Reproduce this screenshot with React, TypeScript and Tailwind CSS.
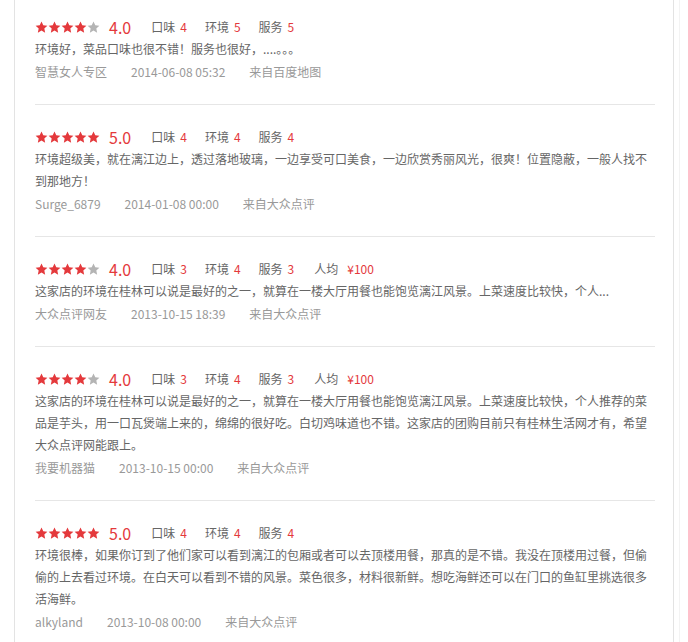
import React from "react";

type Review = {
  stars: number;
  score: string;
  taste: number;
  env: number;
  service: number;
  avg?: string;
  text: string;
  user: string;
  date: string;
  source: string;
};

const reviews: Review[] = [
  {
    stars: 4,
    score: "4.0",
    taste: 4,
    env: 5,
    service: 5,
    text: "环境好，菜品口味也很不错！服务也很好，....。。。",
    user: "智慧女人专区",
    date: "2014-06-08 05:32",
    source: "来自百度地图",
  },
  {
    stars: 5,
    score: "5.0",
    taste: 4,
    env: 4,
    service: 4,
    text: "环境超级美，就在漓江边上，透过落地玻璃，一边享受可口美食，一边欣赏秀丽风光，很爽！位置隐蔽，一般人找不到那地方！",
    user: "Surge_6879",
    date: "2014-01-08 00:00",
    source: "来自大众点评",
  },
  {
    stars: 4,
    score: "4.0",
    taste: 3,
    env: 4,
    service: 3,
    avg: "¥100",
    text: "这家店的环境在桂林可以说是最好的之一，就算在一楼大厅用餐也能饱览漓江风景。上菜速度比较快，个人...",
    user: "大众点评网友",
    date: "2013-10-15 18:39",
    source: "来自大众点评",
  },
  {
    stars: 4,
    score: "4.0",
    taste: 3,
    env: 4,
    service: 3,
    avg: "¥100",
    text: "这家店的环境在桂林可以说是最好的之一，就算在一楼大厅用餐也能饱览漓江风景。上菜速度比较快，个人推荐的菜品是芋头，用一口瓦煲端上来的，绵绵的很好吃。白切鸡味道也不错。这家店的团购目前只有桂林生活网才有，希望大众点评网能跟上。",
    user: "我要机器猫",
    date: "2013-10-15 00:00",
    source: "来自大众点评",
  },
  {
    stars: 5,
    score: "5.0",
    taste: 4,
    env: 4,
    service: 4,
    text: "环境很棒，如果你订到了他们家可以看到漓江的包厢或者可以去顶楼用餐，那真的是不错。我没在顶楼用过餐，但偷偷的上去看过环境。在白天可以看到不错的风景。菜色很多，材料很新鲜。想吃海鲜还可以在门口的鱼缸里挑选很多活海鲜。",
    user: "alkyland",
    date: "2013-10-08 00:00",
    source: "来自大众点评",
  },
];

function Star({ on }: { on: boolean }) {
  return (
    <svg width="13" height="12" viewBox="0 0 24 23" className="shrink-0">
      <path
        d="M12 0.8l3.4 7.3 7.9 0.9-5.9 5.4 1.6 7.9L12 18.3l-7 4 1.6-7.9L0.7 9l7.9-0.9z"
        fill={on ? "#e4393c" : "#b4b4b4"}
      />
    </svg>
  );
}

function Stat({
  label,
  value,
  wide,
}: {
  label: string;
  value: string | number;
  wide?: boolean;
}) {
  return (
    <span className="flex items-center">
      <span className="text-[#666]">{label}</span>
      <span className={(wide ? "ml-[9px] " : "ml-[5px] ") + "text-[#e4393c]"}>
        {value}
      </span>
    </span>
  );
}

function ReviewItem({ r, first }: { r: Review; first: boolean }) {
  return (
    <div
      className={
        (first ? "pt-[16px] " : "pt-[21px] ") +
        "pb-[20px] border-b border-[#e6e6e6]"
      }
    >
      <div className="flex h-[22px] items-center">
        <div className="flex">
          {[0, 1, 2, 3, 4].map((i) => (
            <Star key={i} on={i < r.stars} />
          ))}
        </div>
        <span className="ml-[9px] text-[16px] leading-5 text-[#e4393c]">
          {r.score}
        </span>
        <div className="ml-[20px] flex gap-[18px] text-[12px]">
          <Stat label="口味" value={r.taste} />
          <Stat label="环境" value={r.env} />
          <Stat label="服务" value={r.service} />
          {r.avg && (
            <span className="ml-[2px]">
              <Stat label="人均" value={r.avg} wide />
            </span>
          )}
        </div>
      </div>
      <p className="text-[12px] leading-[22px] text-[#666]">{r.text}</p>
      <div className="flex h-[24px] items-center gap-6 text-[12px] text-[#999]">
        <span>{r.user}</span>
        <span>{r.date}</span>
        <span>{r.source}</span>
      </div>
    </div>
  );
}

export default function App() {
  return (
    <div
      className="min-h-[642px] bg-white"
      style={{ fontFamily: '"Noto Sans CJK SC", "Noto Sans", sans-serif' }}
    >
      <div className="ml-[14px] w-[666px] min-h-[642px] border-r border-[#f3f3f3]">
        <div className="w-[660px] min-h-[642px] border-l border-r border-[#e3e3e3] pl-[20px] pr-[18px]">
          {reviews.map((r, i) => (
            <ReviewItem key={i} r={r} first={i === 0} />
          ))}
        </div>
      </div>
    </div>
  );
}
